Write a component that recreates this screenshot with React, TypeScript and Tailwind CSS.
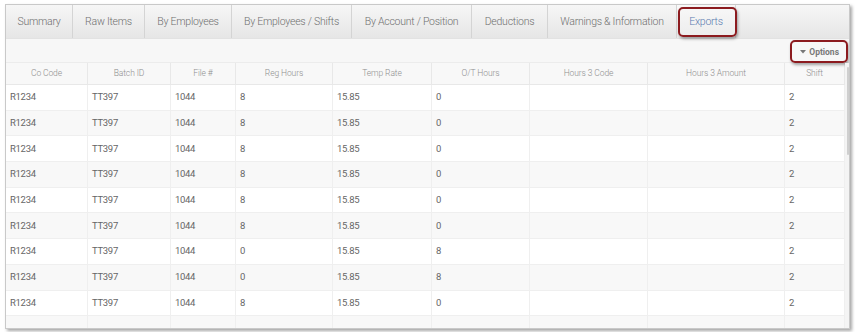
import React from "react";

const tabs = [
  { label: "Summary", w: "w-[67px]" },
  { label: "Raw Items", w: "w-[72px]" },
  { label: "By Employees", w: "w-[87px]" },
  { label: "By Employees / Shifts", w: "w-[120px]" },
  { label: "By Account / Position", w: "w-[120px]" },
  { label: "Deductions", w: "w-[76px]" },
  { label: "Warnings & Information", w: "w-[129px]" },
];

const cols = [
  { label: "Co Code", w: "w-[82px]" },
  { label: "Batch ID", w: "w-[83px]" },
  { label: "File #", w: "w-[65px]" },
  { label: "Reg Hours", w: "w-[97px]" },
  { label: "Temp Rate", w: "w-[99px]" },
  { label: "O/T Hours", w: "w-[98px]" },
  { label: "Hours 3 Code", w: "w-[118px]" },
  { label: "Hours 3 Amount", w: "w-[137px]" },
  { label: "Shift", w: "w-[60px]" },
];

const rows = [
  ["R1234", "TT397", "1044", "8", "15.85", "0", "", "", "2"],
  ["R1234", "TT397", "1044", "8", "15.85", "0", "", "", "2"],
  ["R1234", "TT397", "1044", "8", "15.85", "0", "", "", "2"],
  ["R1234", "TT397", "1044", "8", "15.85", "0", "", "", "2"],
  ["R1234", "TT397", "1044", "8", "15.85", "0", "", "", "2"],
  ["R1234", "TT397", "1044", "8", "15.85", "0", "", "", "2"],
  ["R1234", "TT397", "1044", "0", "15.85", "8", "", "", "2"],
  ["R1234", "TT397", "1044", "0", "15.85", "8", "", "", "2"],
  ["R1234", "TT397", "1044", "8", "15.85", "0", "", "", "2"],
  ["", "", "", "", "", "", "", "", ""],
];

export default function App() {
  return (
    <div
      className="w-[855px] h-[332px] bg-white pl-[5px] pt-[4px] overflow-hidden"
      style={{ fontFamily: "Roboto, 'Liberation Sans', sans-serif" }}
    >
      <div className="w-[845px] h-[325px] border border-[#c9c9c9] shadow-[2px_2px_3px_rgba(0,0,0,0.35)] bg-white overflow-hidden flex flex-col">
        {/* Tab bar */}
        <div className="h-[34px] flex shrink-0 bg-gradient-to-b from-[#f6f6f6] to-[#e6e6e6] border-b border-[#e2e2e2]">
          {tabs.map((t) => (
            <div
              key={t.label}
              className={`${t.w} h-full flex items-center justify-center border-r border-[#d4d4d4] text-[10.5px] tracking-[-0.25px] font-light text-[#6f6f6f]`}
            >
              {t.label}
            </div>
          ))}
          <div className="w-[59px] h-full flex items-center justify-center border-r border-[#d8d8d8] bg-gradient-to-b from-[#f8f8f8] to-[#ececec] relative">
            <span className="text-[10.5px] tracking-[-0.25px] font-light text-[#5a7bb0]">Exports</span>
            <div className="absolute left-[1px] top-[2px] w-[59px] h-[30px] rounded-[5px] border-[2.5px] border-[#8c1b1f] shadow-[1px_2px_3px_rgba(0,0,0,0.35)]" />
          </div>
          <div className="flex-1" />
        </div>
        {/* Toolbar */}
        <div className="h-[24px] shrink-0 bg-[#f7f7f7] flex items-center justify-end pr-[4px] border-b border-[#ececec]">
          <div className="relative flex items-center gap-[3px] h-[20px] px-[6px] mt-[3px]">
            <svg width="6" height="4" viewBox="0 0 6 4">
              <path d="M0 0 L6 0 L3 3.5 Z" fill="#777" />
            </svg>
            <span className="text-[8.5px] font-bold text-[#777]">Options</span>
            <div className="absolute -left-[4px] -top-[2px] w-[58px] h-[23px] rounded-[5px] border-[2.5px] border-[#8c1b1f] shadow-[1px_2px_3px_rgba(0,0,0,0.35)]" />
          </div>
        </div>
        {/* Table */}
        <div className="flex flex-1 min-h-0">
          <div className="w-[839px] flex flex-col">
            <div className="h-[22px] shrink-0 flex bg-[#f8f8f8] border-b border-[#e8e8e8]">
              {cols.map((c) => (
                <div
                  key={c.label}
                  className={`${c.w} h-full flex items-center justify-center border-r border-[#e8e8e8] text-[8.5px] font-light tracking-[-0.1px] text-[#8f8f8f]`}
                >
                  {c.label}
                </div>
              ))}
            </div>
            {rows.map((r, i) => (
              <div
                key={i}
                className={`h-[25.7px] shrink-0 flex border-b border-[#efefef] ${
                  i % 2 === 1 ? "bg-[#f8f8f8]" : "bg-white"
                }`}
              >
                {r.map((v, j) => (
                  <div
                    key={j}
                    className={`${cols[j].w} h-full flex items-center pl-[4px] border-r border-[#efefef] text-[9.5px] tracking-[-0.3px] text-[#666]`}
                  >
                    {v}
                  </div>
                ))}
              </div>
            ))}
          </div>
          <div className="flex-1 bg-[#f4f4f4] relative">
            <div className="absolute left-[2px] top-[4px] w-[2px] h-[88px] bg-[#cfcfcf] rounded" />
          </div>
        </div>
      </div>
    </div>
  );
}
